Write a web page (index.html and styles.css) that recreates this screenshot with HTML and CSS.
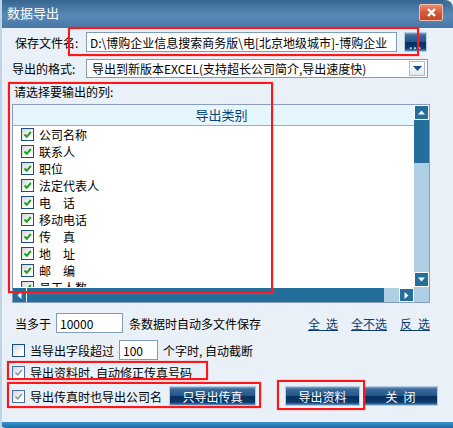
FILE: index.html
```html
<!DOCTYPE html>
<html>
<head>
    <title>数据导出</title>
    <link rel="stylesheet" href="styles.css">
</head>
<body>
    <div class="window">
        <div class="titlebar">
            <span class="title">数据导出</span>
            <span class="close">
                <svg viewBox="0 0 13 11"><path d="M3 2 10 9 M10 2 3 9"/></svg>
            </span>
        </div>

        <div class="content">
            <div class="row file-row">
                <label class="label label-file">保存文件名:</label>
                <input class="text path" value="D:\博购企业信息搜索商务版\电[北京地级城市]-博购企业">
                <button class="btn browse">...</button>
            </div>

            <div class="row format-row">
                <label class="label">导出的格式:</label>
                <div class="select">
                    <span>导出到新版本EXCEL(支持超长公司简介,导出速度快)</span>
                    <span class="drop"><svg viewBox="0 0 9 5"><path d="M0 0H9L4.5 5Z"/></svg></span>
                </div>
            </div>

            <div class="cols-label">请选择要输出的列:</div>

            <div class="listbox">
                <div class="list-main">
                    <div class="list-head">导出类别</div>
                    <div class="list-body">
                        <div class="item"><span class="cb checked"><svg viewBox="0 0 11 11"><path d="M2.5 5.5 4.8 7.8 8.8 3"/></svg></span>公司名称</div>
                        <div class="item"><span class="cb checked"><svg viewBox="0 0 11 11"><path d="M2.5 5.5 4.8 7.8 8.8 3"/></svg></span>联系人</div>
                        <div class="item"><span class="cb checked"><svg viewBox="0 0 11 11"><path d="M2.5 5.5 4.8 7.8 8.8 3"/></svg></span>职位</div>
                        <div class="item"><span class="cb checked"><svg viewBox="0 0 11 11"><path d="M2.5 5.5 4.8 7.8 8.8 3"/></svg></span>法定代表人</div>
                        <div class="item"><span class="cb checked"><svg viewBox="0 0 11 11"><path d="M2.5 5.5 4.8 7.8 8.8 3"/></svg></span>电　话</div>
                        <div class="item"><span class="cb checked"><svg viewBox="0 0 11 11"><path d="M2.5 5.5 4.8 7.8 8.8 3"/></svg></span>移动电话</div>
                        <div class="item"><span class="cb checked"><svg viewBox="0 0 11 11"><path d="M2.5 5.5 4.8 7.8 8.8 3"/></svg></span>传　真</div>
                        <div class="item"><span class="cb checked"><svg viewBox="0 0 11 11"><path d="M2.5 5.5 4.8 7.8 8.8 3"/></svg></span>地　址</div>
                        <div class="item"><span class="cb checked"><svg viewBox="0 0 11 11"><path d="M2.5 5.5 4.8 7.8 8.8 3"/></svg></span>邮　编</div>
                        <div class="item"><span class="cb checked"><svg viewBox="0 0 11 11"><path d="M2.5 5.5 4.8 7.8 8.8 3"/></svg></span>员工人数</div>
                    </div>
                </div>
                <div class="vscroll">
                    <span class="sbtn"><svg viewBox="0 0 7 4"><path d="M0 4H7L3.5 0Z"/></svg></span>
                    <span class="vthumb"></span>
                    <span class="vtrack"></span>
                    <span class="sbtn"><svg viewBox="0 0 7 4"><path d="M0 0H7L3.5 4Z"/></svg></span>
                </div>
                <div class="hscroll">
                    <span class="sbtn hleft"><svg viewBox="0 0 4 7"><path d="M4 0V7L0 3.5Z"/></svg></span>
                    <span class="hthumb"></span>
                    <span class="htrack"></span>
                    <span class="sbtn"><svg viewBox="0 0 4 7"><path d="M0 0V7L4 3.5Z"/></svg></span>
                </div>
                <div class="corner"></div>
            </div>

            <div class="opt-row row-a">
                <span class="pad">当多于</span>
                <input class="text count" value="10000">
                <span class="after">条数据时自动多文件保存</span>
                <span class="links">
                    <a href="#">全&ensp;选</a>
                    <a href="#">全不选</a>
                    <a href="#">反&ensp;选</a>
                </span>
            </div>

            <div class="opt-row row-b">
                <span class="cb"></span>
                <span class="cb-text">当导出字段超过</span>
                <input class="text limit" value="100">
                <span class="after">个字时, 自动截断</span>
            </div>

            <div class="opt-row row-c">
                <span class="cb soft"><svg viewBox="0 0 11 11"><path d="M2.5 5.5 4.8 7.8 8.8 3"/></svg></span>
                <span class="cb-text">导出资料时, 自动修正传真号码</span>
            </div>

            <div class="opt-row row-d">
                <span class="cb soft"><svg viewBox="0 0 11 11"><path d="M2.5 5.5 4.8 7.8 8.8 3"/></svg></span>
                <span class="cb-text">导出传真时也导出公司名</span>
                <button class="btn fax-only">只导出传真</button>
                <button class="btn export">导出资料</button>
                <button class="btn close-btn">关&ensp;闭</button>
            </div>
        </div>

        <div class="frame-bottom"></div>

        <!-- red annotation boxes -->
        <div class="mark mark-file"></div>
        <div class="mark mark-list"></div>
        <div class="mark mark-fix"></div>
        <div class="mark mark-fax"></div>
        <div class="mark mark-export"></div>
    </div>
</body>
</html>
```

FILE: styles.css
```css
* { box-sizing: border-box; }
body { margin: 0; background: #e9f0f7; font-family: "Noto Sans CJK SC", "Liberation Sans", sans-serif; font-size: 12px; color: #000; }

.window { position: relative; width: 453px; height: 428px; background: #e9f0f7; border-left: 2px solid #bfd3e7; overflow: hidden; }

/* title bar */
.titlebar { height: 28px; margin-left: -2px; display: flex; align-items: center; justify-content: space-between; padding: 0 10px 0 7px; background: linear-gradient(#36668f, #5a88b6 55%, #4677a6); border-radius: 0 8px 0 0; color: #fff; }
.title { font-size: 13px; line-height: 16px; margin-top: -3px; }
.close { width: 24px; height: 17px; margin-top: -4px; display: flex; align-items: center; justify-content: center; background: linear-gradient(#ec8a6a, #d45a3a 50%, #c4472a); border: 1px solid #f3c2ae; border-radius: 2px; }
.close svg { width: 13px; height: 11px; }
.close path { stroke: #fff; stroke-width: 2.4; fill: none; }

.content { padding: 0 23px 0 10px; }

.row { display: flex; align-items: center; }
.label { width: 74px; flex-shrink: 0; }
.label-file { padding-left: 3px; }

.text { height: 20px; border: 1px solid #7f9db9; background: #fff; font-family: inherit; font-size: 12px; padding: 0 3px; color: #000; }

.file-row { margin-top: 4px; height: 20px; }
.path { width: 311px; }
.browse { width: 23px; height: 20px; margin-left: 7px; padding: 0; font-size: 12px; line-height: 22px; letter-spacing: 1px; }

.format-row { margin-top: 7px; height: 19px; }
.select { width: 342px; height: 19px; display: flex; align-items: center; justify-content: space-between; border: 1px solid #7f9db9; background: #fff; padding: 0 2px 0 5px; }
.drop { width: 16px; height: 15px; display: flex; align-items: center; justify-content: center; border: 1px solid #a7bcd6; background: linear-gradient(#fff, #e3e9f0); }
.drop svg { width: 9px; height: 5px; }
.drop path { fill: #1d4f86; }

.cols-label { margin-top: 6px; padding-left: 2px; line-height: 16px; }

/* column list */
.listbox { margin-top: 4px; width: 418px; height: 199px; border: 1px solid #8c9dc3; display: grid; grid-template-columns: 1fr 15px; grid-template-rows: 1fr 15px; background: #fff; }
.list-main { overflow: hidden; }
.list-head { height: 21px; line-height: 20px; padding-left: 16px; text-align: center; background: #e5f6fd; border-bottom: 1px solid #8fb2c8; color: #0c3f74; font-size: 13px; }
.item { height: 17px; display: flex; align-items: center; padding-left: 8px; }
.item .cb { margin-right: 5px; }

.cb { width: 13px; height: 13px; flex-shrink: 0; display: inline-flex; align-items: center; justify-content: center; border: 1px solid #1d4e7e; background: linear-gradient(135deg, #d4d6d8, #fff 75%); }
.cb svg { width: 11px; height: 11px; }
.cb path { fill: none; stroke: #20a020; stroke-width: 2; }
.cb.soft { border-color: #4a6fa6; }
.cb.soft path { stroke: #8c99a8; stroke-width: 1.6; }

.vscroll { display: flex; flex-direction: column; background: #aecfe2; }
.sbtn { width: 15px; height: 15px; flex-shrink: 0; display: flex; align-items: center; justify-content: center; background: #236e9a; border: 1px solid #fff; }
.sbtn svg { width: 7px; height: 7px; }
.sbtn path { fill: #fff; }
.vthumb { height: 43px; background: #236e9a; }
.vtrack { flex: 1; }
.hscroll { display: flex; background: #aecfe2; border-top: 1px solid #fff; }
.hscroll .sbtn { height: 14px; }
.hleft { width: 14px; border: none; border-right: 1px solid #fff; }
.hthumb { width: 357px; background: #236e9a; }
.htrack { flex: 1; }
.corner { background: #aecfe2; }

/* options */
.opt-row { display: flex; align-items: center; height: 20px; white-space: nowrap; }
.opt-row > * { flex-shrink: 0; }
.opt-row .cb-text { margin-left: 5px; }
.row-a { margin-top: 10px; }
.pad { padding-left: 3px; }
.count { width: 67px; margin-left: 5px; }
.row-a .after { margin-left: 6px; }
.links { margin-left: auto; display: flex; gap: 13px; }
.links a { color: #0d3d6e; text-decoration: underline; }

.row-b { margin-top: 7px; }
.limit { width: 39px; margin-left: 5px; }
.row-b .after { margin-left: 5px; }

.row-c { margin-top: 4px; height: 16px; }
.row-d { margin-top: 6px; }

/* buttons */
.btn { height: 20px; flex-shrink: 0; border: 1px solid #b6cde2; color: #fff; font-family: inherit; font-size: 12px; background: linear-gradient(#7ea5cb, #3a6a9a 12%, #245889 48%, #07305f 52%, #0c3a6c 85%, #5d90bf); cursor: pointer; padding: 0; }
.fax-only { width: 87px; margin-left: 7px; }
.export { width: 75px; margin-left: 29px; }
.close-btn { width: 75px; margin-left: 3px; }

.frame-bottom { position: absolute; left: -2px; right: 0; bottom: 0; height: 6px; background: linear-gradient(#3a92cc, #1d6aa4); border-radius: 0 0 0 6px; }

/* red markup boxes drawn over the dialog */
.mark { position: absolute; border: 2px solid #ff1616; box-shadow: 0 0 1px #ff6060; }
.mark-file { left: 66px; top: 27px; width: 351px; height: 29px; }
.mark-list { left: 6px; top: 82px; width: 265px; height: 211px; }
.mark-fix { left: 5px; top: 361px; width: 201px; height: 19px; }
.mark-fax { left: 5px; top: 382px; width: 254px; height: 26px; }
.mark-export { left: 275px; top: 380px; width: 88px; height: 30px; }
```
